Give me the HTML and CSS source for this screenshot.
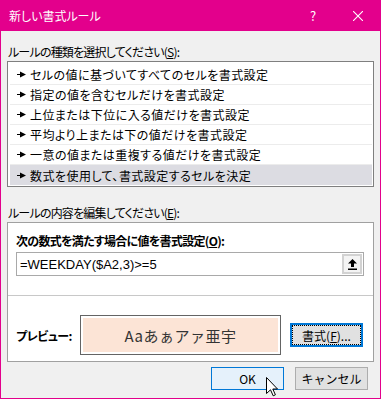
FILE: index.html
```html
<!DOCTYPE html>
<html lang="ja">
<head>
<meta charset="utf-8">
<title>新しい書式ルール</title>
<link rel="stylesheet" href="styles.css">
</head>
<body>
<div class="window">
  <div class="titlebar">
    <span class="title">新しい書式ルール</span>
    <span class="help">?</span>
    <svg class="close" width="10" height="10" viewBox="0 0 10 10"><path d="M0 0L10 10M10 0L0 10" stroke="#fff" stroke-width="1.1" fill="none"/></svg>
  </div>
  <div class="content">
    <div class="label">ルールの種類を選択してください(<u>S</u>):</div>
    <ul class="rulelist">
      <li><svg class="arrow" width="9" height="7" viewBox="0 0 9 7"><path d="M0 3h4v1H0z M3 0.5L9 3.5L3 6.5z" fill="#000"/></svg><span>セルの値に基づいてすべてのセルを書式設定</span></li>
      <li><svg class="arrow" width="9" height="7" viewBox="0 0 9 7"><path d="M0 3h4v1H0z M3 0.5L9 3.5L3 6.5z" fill="#000"/></svg><span>指定の値を含むセルだけを書式設定</span></li>
      <li><svg class="arrow" width="9" height="7" viewBox="0 0 9 7"><path d="M0 3h4v1H0z M3 0.5L9 3.5L3 6.5z" fill="#000"/></svg><span>上位または下位に入る値だけを書式設定</span></li>
      <li><svg class="arrow" width="9" height="7" viewBox="0 0 9 7"><path d="M0 3h4v1H0z M3 0.5L9 3.5L3 6.5z" fill="#000"/></svg><span>平均より上または下の値だけを書式設定</span></li>
      <li><svg class="arrow" width="9" height="7" viewBox="0 0 9 7"><path d="M0 3h4v1H0z M3 0.5L9 3.5L3 6.5z" fill="#000"/></svg><span>一意の値または重複する値だけを書式設定</span></li>
      <li class="selected"><svg class="arrow" width="9" height="7" viewBox="0 0 9 7"><path d="M0 3h4v1H0z M3 0.5L9 3.5L3 6.5z" fill="#000"/></svg><span>数式を使用して、書式設定するセルを決定</span></li>
    </ul>
    <div class="label label2">ルールの内容を編集してください(<u>E</u>):</div>
    <div class="group">
      <div class="formula-section">
        <div class="bold-label">次の数式を満たす場合に値を書式設定(<u>O</u>):</div>
        <div class="input">
          <span class="input-text">=WEEKDAY($A2,3)&gt;=5</span>
          <span class="collapse-btn"><span class="collapse-inner"><svg width="9" height="11" viewBox="0 0 9 11"><path d="M4.5 0L9 4.5H6V8H3V4.5H0z M0 9.5h9V11H0z" fill="#000"/></svg></span></span>
        </div>
      </div>
      <div class="preview-section">
        <span class="preview-label">プレビュー:</span>
        <div class="preview-box"><div class="preview-fill">Aaあぁアァ亜宇</div></div>
        <button class="format-btn"><span class="focus">書式(<u>F</u>)...</span></button>
      </div>
    </div>
    <div class="buttons">
      <button class="btn ok">OK</button>
      <button class="btn">キャンセル</button>
    </div>
  </div>
</div>
<svg class="cursor" width="13" height="20" viewBox="0 0 13 20"><path d="M0.5 0.5V16.5L4.5 12.8L7.2 18.8L9.4 17.8L6.8 12H11.5Z" fill="#fff" stroke="#000" stroke-width="1" stroke-linejoin="miter"/></svg>
</body>
</html>
```
FILE: styles.css
```css
* { box-sizing: border-box; }
html, body { margin: 0; padding: 0; background: #fff; }
body {
  font-family: "Noto Sans CJK JP", "Noto Sans", sans-serif;
  font-size: 12px;
  color: #000;
  font-feature-settings: "palt";
}
.window {
  width: 381px;
  height: 399px;
  border: 1px solid #e3008c;
  border-top: 0;
  background: #f0f0f0;
  display: flex;
  flex-direction: column;
}
.titlebar {
  height: 31px;
  margin: 0 -1px;
  background: #e3008c;
  color: #fff;
  display: flex;
  align-items: center;
  flex: none;
}
.title { padding-left: 9px; font-size: 12px; }
.help { margin-left: auto; width: 20px; text-align: center; font-size: 13px; margin-right: 30px; }
.close { margin-right: 18px; }
.content { padding: 11px 6px 0 6px; flex: 1; }
.label { line-height: 19px; height: 19px; padding-left: 1px; white-space: nowrap; letter-spacing: -0.8px; }
.label2 { margin-top: 16px; }
u { text-decoration: underline; text-underline-offset: 1px; }
.rulelist {
  list-style: none;
  margin: 0;
  padding: 3px 1px 1px 2px;
  height: 126px;
  background: #fff;
  border: 1px solid #7f7f7f;
}
.rulelist li {
  height: 20px;
  border-bottom: 1px solid #ececec;
  display: flex;
  align-items: center;
  padding-left: 7px;
  white-space: nowrap;
  letter-spacing: 0.45px;
}
.rulelist li.selected { border-bottom: 0; background: #dcdce2; }
.arrow { flex: none; margin-right: 4px; }
.group {
  height: 140px;
  background: #fff;
  border: 1px solid #a0a0a0;
  display: flex;
  flex-direction: column;
}
.formula-section { padding: 8px 9px 19px 8px; }
.bold-label { font-weight: bold; line-height: 19px; height: 19px; white-space: nowrap; letter-spacing: -0.7px; }
.input {
  margin-top: 2px;
  height: 24px;
  border: 1px solid #a9a9a9;
  display: flex;
  align-items: center;
  padding: 1px;
}
.input-text {
  flex: 1;
  padding-left: 2px;
  font-family: "Liberation Sans", "Noto Sans", sans-serif;
  font-size: 13px;
}
.collapse-btn {
  width: 20px;
  height: 20px;
  background: #d2d2d2;
  padding: 2px;
  display: flex;
}
.collapse-inner {
  flex: 1;
  background: #f4f4f4;
  display: flex;
  align-items: center;
  justify-content: center;
}
.preview-section {
  border-top: 1px solid #c8c8c8;
  padding: 19px 0 6px 8px;
  display: flex;
  align-items: center;
}
.preview-label { width: 64px; flex: none; font-weight: bold; white-space: nowrap; letter-spacing: -0.5px; }
.preview-box {
  width: 201px;
  height: 40px;
  border: 1px solid #646464;
  padding: 2px;
  display: flex;
}
.preview-fill {
  flex: 1;
  background: #fce4d6;
  display: flex;
  align-items: center;
  justify-content: center;
  font-size: 15px;
  color: #333;
  letter-spacing: 0.5px;
  font-feature-settings: normal;
}
.format-btn {
  margin-left: 9px;
  width: 73px;
  height: 24px;
  border: 2px solid #0078d7;
  background: #e1e1e1;
  padding: 0;
  display: flex;
  font-family: inherit;
  font-size: 12px;
  color: #000;
}
.focus {
  flex: 1;
  border: 1px dotted #000;
  display: flex;
  align-items: center;
  justify-content: center;
  white-space: nowrap;
}
.buttons {
  margin-top: 5px;
  padding-right: 6px;
  display: flex;
  justify-content: flex-end;
  gap: 11px;
}
.btn {
  width: 73px;
  height: 23px;
  border: 1px solid #adadad;
  background: #e1e1e1;
  font-family: inherit;
  font-size: 12px;
  color: #000;
  padding: 0;
}
.btn.ok { border-color: #0078d7; background: #e5f1fb; }
.cursor { position: absolute; left: 266px; top: 377px; }
```
